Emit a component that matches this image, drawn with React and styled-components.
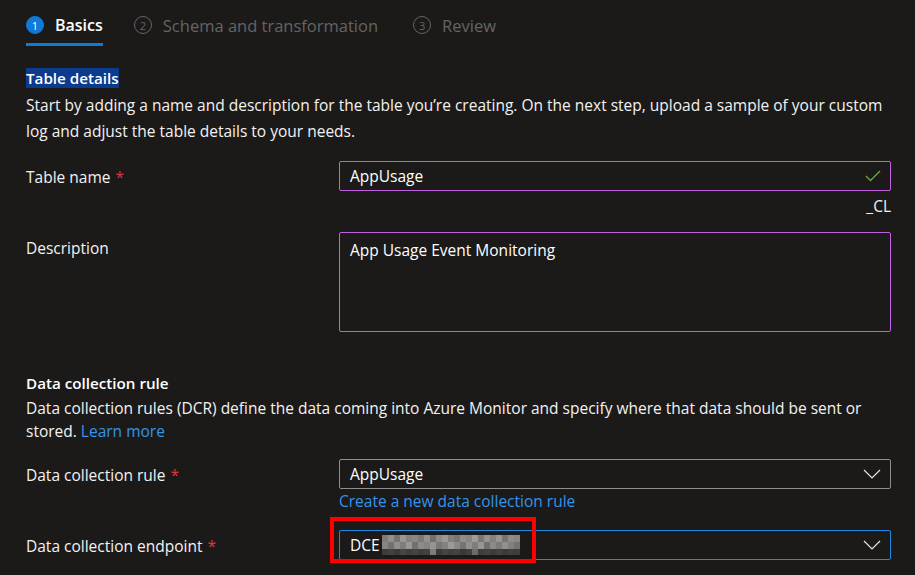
import React from 'react';
import styled, { createGlobalStyle } from 'styled-components';

const GlobalStyle = createGlobalStyle`
  html, body {
    margin: 0;
    background: #1b1a19;
  }
  body {
    font-family: "Segoe UI", "Open Sans", "Liberation Sans", sans-serif;
    color: #f3f2f1;
    font-size: 15.5px;
  }
`;

const steps = [
  { n: 1, label: 'Basics', active: true, space: 31 },
  { n: 2, label: 'Schema and transformation', space: 35 },
  { n: 3, label: 'Review', space: 0 },
];

// pixelated block to hide the endpoint name
const mosaic = [
  [0x7a, 0x8e, 0x72, 0x95, 0x80, 0x86, 0x78, 0x90, 0x6e, 0x8a, 0x97, 0x7e, 0x74, 0x8c, 0x84, 0x99, 0x76, 0x91, 0x7f, 0x94, 0x73, 0x8b, 0x85],
  [0x84, 0x70, 0x8d, 0x7b, 0x96, 0x6f, 0x89, 0x82, 0x92, 0x75, 0x80, 0x98, 0x87, 0x72, 0x8f, 0x7c, 0x93, 0x6d, 0x88, 0x79, 0x8e, 0x7e, 0x71],
  [0x3a, 0x40, 0x38, 0x44, 0x3c, 0x42, 0x3b, 0x3f, 0x7a, 0x39, 0x43, 0x3d, 0x41, 0x37, 0x3e, 0x6a, 0x3c, 0x40, 0x3a, 0x3f, 0x38, 0x3d, 0x3b],
];

const Page = styled.div`
  padding: 0 24px 20px 26px;
`;

const Tabs = styled.div`
  display: flex;
  align-items: flex-start;
  height: 47px;
`;

const Tab = styled.div`
  display: flex;
  align-items: center;
  gap: 11px;
  height: 47px;
  margin-right: ${p => p.$space}px;
  box-sizing: border-box;
  padding-top: 3px;
  position: relative;
  font-size: ${p => (p.$active ? 16 : 16.5)}px;
  font-weight: ${p => (p.$active ? 600 : 400)};
  color: ${p => (p.$active ? '#ffffff' : '#646464')};
  &::after {
    content: '';
    display: ${p => (p.$active ? 'block' : 'none')};
    position: absolute;
    left: 0;
    right: 0;
    bottom: 1px;
    height: 3px;
    background: #0f7ad8;
  }
`;

const StepNum = styled.span`
  width: 18px;
  height: 18px;
  border-radius: 50%;
  box-sizing: border-box;
  display: flex;
  align-items: center;
  justify-content: center;
  font-size: 11px;
  font-weight: 400;
  background: ${p => (p.$active ? '#0f7ad8' : 'transparent')};
  border: 1px solid ${p => (p.$active ? '#0f7ad8' : '#646464')};
  color: ${p => (p.$active ? '#ffffff' : '#646464')};
`;

const Heading = styled.h2`
  margin: ${p => p.$top}px 0 0;
  font-size: 15.2px;
  font-weight: 600;
  line-height: 25px;
  color: #ffffff;
  span {
    background: ${p => (p.$selected ? '#0c3a8d' : 'transparent')};
  }
`;

const Para = styled.p`
  margin: 1px 0 0;
  max-width: ${p => p.$max || 865}px;
  line-height: ${p => p.$lh}px;
`;

const Link = styled.a`
  color: #3593ec;
  text-decoration: none;
  cursor: pointer;
`;

const Row = styled.div`
  display: grid;
  grid-template-columns: 313px 1fr;
  align-items: start;
  margin-top: ${p => p.$top}px;
`;

const Label = styled.label`
  line-height: 20px;
  padding-top: 6px;
  em {
    color: #e2323e;
    font-style: normal;
    margin-left: 5px;
  }
`;

const Field = styled.div`
  display: flex;
  flex-direction: column;
`;

const Box = styled.div`
  box-sizing: border-box;
  height: ${p => p.$h || 30}px;
  border: 1px solid ${p => p.$border};
  border-radius: 2px;
  display: flex;
  align-items: ${p => (p.$multi ? 'flex-start' : 'center')};
  justify-content: space-between;
  padding: ${p => (p.$multi ? '6px 10px' : '0 9px 0 10px')};
  color: #ffffff;
`;

const Suffix = styled.div`
  align-self: flex-end;
  line-height: 20px;
  margin-top: 5px;
`;

const Hint = styled(Link)`
  line-height: 20px;
  margin-top: 2px;
`;

const Value = styled.span`
  display: flex;
  align-items: center;
  gap: 2px;
`;

const Marker = styled.div`
  position: absolute;
  left: -9px;
  top: -13px;
  width: 206px;
  height: 46px;
  border: 4px solid #ff0000;
  box-sizing: border-box;
  pointer-events: none;
`;

const Anchor = styled.div`
  position: relative;
`;

const Chevron = () => (
  <svg width="18" height="10" viewBox="0 0 18 10" fill="none">
    <polyline points="1,1 9,9 17,1" stroke="#e6e6e6" strokeWidth="1.2" />
  </svg>
);

const Check = () => (
  <svg width="16" height="12" viewBox="0 0 16 12" fill="none">
    <polyline points="1,6 5.5,10.5 15,1" stroke="#6fa83e" strokeWidth="1.3" />
  </svg>
);

const Mosaic = () => (
  <svg width="138" height="20" viewBox="0 0 138 20">
    {mosaic.map((row, r) =>
      row.map((g, c) => (
        <rect
          key={`${r}-${c}`}
          x={c * 6}
          y={r * 7}
          width="6"
          height={r === 2 ? 6 : 7}
          fill={`rgb(${g + 4},${g + 2},${g})`}
        />
      ))
    )}
  </svg>
);

const App = () => (
  <>
    <GlobalStyle />
    <Page>
      <Tabs>
        {steps.map(s => (
          <Tab key={s.n} $active={s.active} $space={s.space}>
            <StepNum $active={s.active}>{s.n}</StepNum>
            {s.label}
          </Tab>
        ))}
      </Tabs>

      <Heading $top={19} $selected><span>Table details</span></Heading>
      <Para $lh={26} $max={860}>
        Start by adding a name and description for the table you’re creating. On the next step, upload a sample of your custom
        log and adjust the table details to your needs.
      </Para>

      <Row $top={17}>
        <Label>Table name<em>*</em></Label>
        <Field>
          <Box $border="#c15fe4">
            AppUsage
            <Check />
          </Box>
          <Suffix>_CL</Suffix>
        </Field>
      </Row>

      <Row $top={16}>
        <Label>Description</Label>
        <Box $border="#c15fe4" $h={100} $multi>App Usage Event Monitoring</Box>
      </Row>

      <Heading $top={39}><span>Data collection rule</span></Heading>
      <Para $lh={23}>
        Data collection rules (DCR) define the data coming into Azure Monitor and specify where that data should be sent or
        stored. <Link>Learn more</Link>
      </Para>

      <Row $top={16}>
        <Label>Data collection rule<em>*</em></Label>
        <Field>
          <Box $border="#8e8e8e">
            AppUsage
            <Chevron />
          </Box>
          <Hint>Create a new data collection rule</Hint>
        </Field>
      </Row>

      <Row $top={19}>
        <Label>Data collection endpoint<em>*</em></Label>
        <Anchor>
          <Box $border="#1f8ae6">
            <Value>DCE <Mosaic /></Value>
            <Chevron />
          </Box>
          <Marker />
        </Anchor>
      </Row>
    </Page>
  </>
);

export default App;
